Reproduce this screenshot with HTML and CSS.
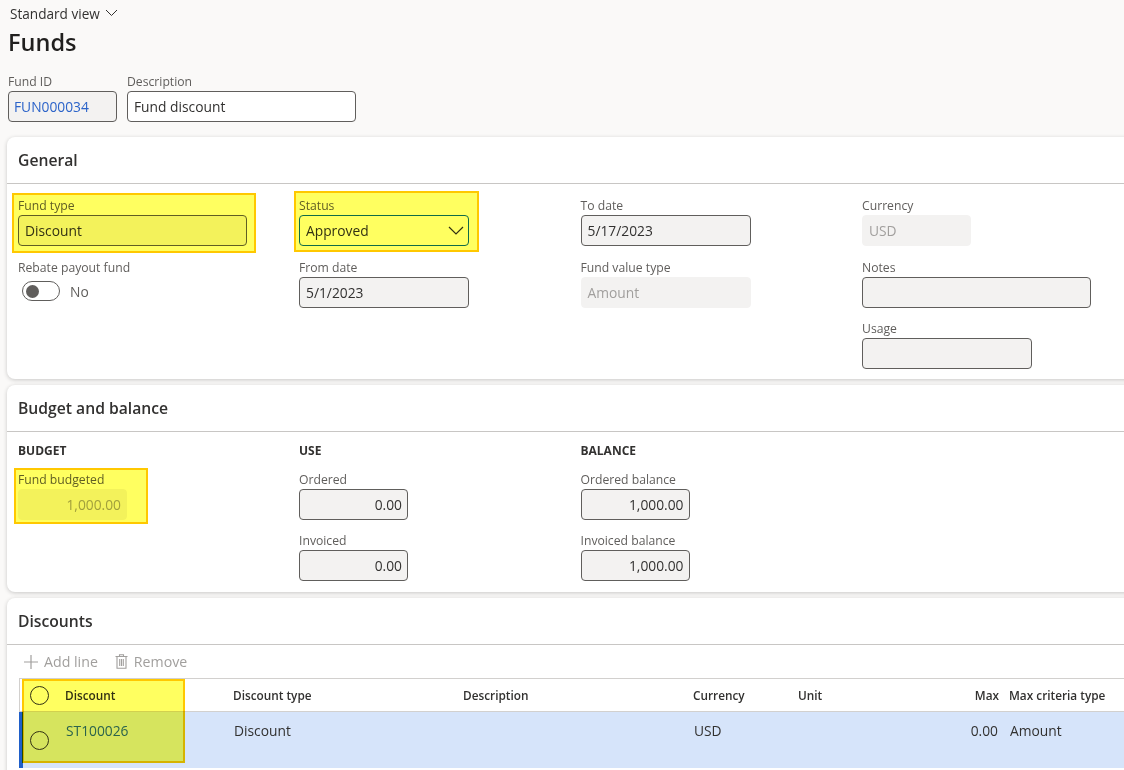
FILE: index.html
```html
<!DOCTYPE html>
<html lang="en">
<head>
    <meta charset="UTF-8">
    <meta name="viewport" content="width=device-width, initial-scale=1.0">
    <title>Funds</title>
    <link rel="stylesheet" href="styles.css">
</head>
<body>
    <div class="view_bar">
        <span>Standard view</span>
        <svg class="view_chevron" width="13" height="8" viewBox="0 0 13 8"><path d="M1 1l5.5 5.5L12 1" fill="none" stroke="#323130" stroke-width="1"/></svg>
    </div>
    <h1 class="page_title">Funds</h1>

    <section class="head_fields">
        <div class="field">
            <div class="field_label">Fund ID</div>
            <div class="input w109"><span class="link fund_id">FUN000034</span></div>
        </div>
        <div class="field">
            <div class="field_label">Description</div>
            <div class="input white w229">Fund discount</div>
        </div>
    </section>

    <section class="card card_general">
        <h2 class="card_title">General</h2>
        <div class="card_cols">
            <div class="col">
                <div class="field">
                    <div class="field_label">Fund type</div>
                    <div class="input w229">Discount</div>
                    <div class="mark mark_type"></div>
                </div>
                <div class="field">
                    <div class="field_label">Rebate payout fund</div>
                    <div class="toggle_row">
                        <span class="toggle"><span class="toggle_knob"></span></span>
                        <span class="toggle_text">No</span>
                    </div>
                </div>
            </div>
            <div class="col">
                <div class="field">
                    <div class="field_label">Status</div>
                    <div class="input white w170 status_box">
                        Approved
                        <svg width="16" height="9" viewBox="0 0 16 9"><path d="M1 1l7 7 7-7" fill="none" stroke="#323130" stroke-width="1.2"/></svg>
                    </div>
                    <div class="mark mark_status"></div>
                </div>
                <div class="field">
                    <div class="field_label">From date</div>
                    <div class="input w170">5/1/2023</div>
                </div>
            </div>
            <div class="col">
                <div class="field">
                    <div class="field_label">To date</div>
                    <div class="input w170">5/17/2023</div>
                </div>
                <div class="field">
                    <div class="field_label">Fund value type</div>
                    <div class="input off w170">Amount</div>
                </div>
            </div>
            <div class="col">
                <div class="field">
                    <div class="field_label">Currency</div>
                    <div class="input off w109">USD</div>
                </div>
                <div class="field">
                    <div class="field_label">Notes</div>
                    <div class="input w229"></div>
                </div>
                <div class="field">
                    <div class="field_label">Usage</div>
                    <div class="input w170"></div>
                </div>
            </div>
        </div>
    </section>

    <section class="card card_budget">
        <h2 class="card_title">Budget and balance</h2>
        <div class="card_cols">
            <div class="col">
                <h3 class="group_title">BUDGET</h3>
                <div class="field">
                    <div class="field_label">Fund budgeted</div>
                    <div class="input off w109 num">1,000.00</div>
                    <div class="mark mark_budget"></div>
                </div>
            </div>
            <div class="col">
                <h3 class="group_title">USE</h3>
                <div class="field">
                    <div class="field_label">Ordered</div>
                    <div class="input w109 num">0.00</div>
                </div>
                <div class="field">
                    <div class="field_label">Invoiced</div>
                    <div class="input w109 num">0.00</div>
                </div>
            </div>
            <div class="col">
                <h3 class="group_title">BALANCE</h3>
                <div class="field">
                    <div class="field_label">Ordered balance</div>
                    <div class="input w109 num">1,000.00</div>
                </div>
                <div class="field">
                    <div class="field_label">Invoiced balance</div>
                    <div class="input w109 num">1,000.00</div>
                </div>
            </div>
        </div>
    </section>

    <section class="card card_discounts">
        <h2 class="card_title">Discounts</h2>
        <div class="toolbar">
            <span class="tool">
                <svg width="14" height="14" viewBox="0 0 14 14"><path d="M7 0v14M0 7h14" stroke="#a19f9d" stroke-width="1.2" fill="none"/></svg>
                Add line
            </span>
            <span class="tool">
                <svg width="13" height="15" viewBox="0 0 13 15"><path d="M4.5 2V.7h4V2M.5 2.5h12M2 2.5v11.8h9V2.5M4.7 5v7M6.5 5v7M8.3 5v7" stroke="#a19f9d" stroke-width="1.1" fill="none"/></svg>
                Remove
            </span>
        </div>
        <div class="grid_wrap">
            <div class="grid_row grid_head">
                <span class="radio"></span>
                <span>Discount</span>
                <span>Discount type</span>
                <span>Description</span>
                <span>Currency</span>
                <span>Unit</span>
                <span class="right">Max</span>
                <span class="last">Max criteria type</span>
            </div>
            <div class="grid_row grid_line">
                <span class="radio"></span>
                <span class="link">ST100026</span>
                <span>Discount</span>
                <span></span>
                <span>USD</span>
                <span></span>
                <span class="right">0.00</span>
                <span class="last">Amount</span>
            </div>
            <div class="mark mark_grid"></div>
        </div>
    </section>
</body>
</html>
```

FILE: styles.css
```css
html, body {
    margin: 0;
    height: 100%;
    overflow: hidden;
}
body {
    width: 1124px;
    height: 770px;
    background: #faf9f8;
    color: #323130;
    font-family: "Open Sans", "Noto Sans", sans-serif;
    font-size: 13.8px;
}

.view_bar {
    display: flex;
    align-items: center;
    gap: 5px;
    height: 27px;
    padding-left: 10px;
    font-size: 13.6px;
}
.view_chevron {
    margin-top: -2px;
}
.page_title {
    margin: 0 0 0 8px;
    height: 30px;
    line-height: 30px;
    font-size: 23.5px;
    font-weight: 600;
    color: #201f1e;
}

.head_fields {
    display: flex;
    gap: 10px;
    margin: 14px 0 15px 8px;
}

.field {
    position: relative;
}
.field_label {
    height: 20px;
    line-height: 21px;
    font-size: 12.2px;
    font-weight: 500;
    color: #605e5c;
}
.input {
    box-sizing: border-box;
    height: 31px;
    line-height: 30px;
    padding: 0 5px 0 6px;
    background: #f3f2f1;
    border: 1px solid #605e5c;
    border-radius: 4px;
}
.white {
    background: #fff;
}
.off {
    border-color: #f3f2f1;
    color: #a19f9d;
}
.num {
    text-align: right;
}
.link {
    color: #2b63c9;
}
.fund_id {
    margin-left: -1px;
}
.w109 { width: 109px; }
.w170 { width: 170px; }
.w229 { width: 229px; }

.status_box {
    display: flex;
    align-items: center;
    justify-content: space-between;
    padding-right: 4px;
    border-color: #0f6cbd;
}

.toggle_row {
    display: flex;
    align-items: center;
    gap: 10px;
    height: 29px;
    padding-left: 4px;
}
.toggle {
    box-sizing: border-box;
    display: flex;
    align-items: center;
    width: 38px;
    height: 20px;
    padding-left: 3px;
    background: #fff;
    border: 1px solid #605e5c;
    border-radius: 10px;
}
.toggle_knob {
    width: 13px;
    height: 13px;
    background: #605e5c;
    border-radius: 50%;
}
.toggle_text {
    color: #605e5c;
}

.card {
    margin: 0 -20px 6px 7px;
    background: #fff;
    border-radius: 8px;
    box-shadow: 0 1px 4px rgba(0, 0, 0, 0.2);
}
.card_title {
    box-sizing: border-box;
    height: 47px;
    margin: 0;
    padding-left: 11px;
    line-height: 46px;
    font-size: 15.7px;
    font-weight: 600;
    border-bottom: 1px solid #c8c6c4;
}
.card_cols {
    display: grid;
    grid-template-columns: 281px 281.5px 281.5px 281.5px;
    padding: 11px 0 10px 11px;
}
.card_budget .card_cols {
    padding-bottom: 11px;
}
.card_discounts {
    padding-bottom: 20px;
}
.col {
    display: flex;
    flex-direction: column;
    gap: 10.5px;
}
.group_title {
    height: 16px;
    margin: 0;
    line-height: 16px;
    font-size: 12px;
    font-weight: 700;
}
.col .group_title + .field {
    margin-top: -1px;
}

/* yellow marker the author drew over the screenshot */
.mark {
    position: absolute;
    box-sizing: border-box;
    background: #ffff60;
    border: 2px solid #ffc800;
    mix-blend-mode: multiply;
}
.mark_type {
    top: -2px;
    left: -6px;
    width: 244px;
    height: 60px;
}
.mark_status {
    top: -4px;
    left: -5px;
    width: 185px;
    height: 61px;
}
.mark_budget {
    top: -1px;
    left: -4px;
    width: 134px;
    height: 56px;
}
.mark_grid {
    top: 0;
    left: 2px;
    width: 163px;
    height: 84px;
}

.toolbar {
    display: flex;
    align-items: center;
    gap: 17px;
    height: 33px;
    padding-left: 17px;
    font-size: 14.2px;
    color: #a19f9d;
}
.tool {
    display: flex;
    align-items: center;
    gap: 6px;
}

.grid_wrap {
    position: relative;
    margin: 0 0 0 12px;
    border-top: 1px solid #d2d0ce;
    border-left: 1px solid #d2d0ce;
}
.grid_row {
    display: grid;
    grid-template-columns: 45px 168px 230px 230px 105px 120px 81px 170px;
}
.grid_head {
    box-sizing: border-box;
    height: 33px;
    align-items: center;
    font-size: 11.8px;
    font-weight: 600;
    border-bottom: 1px solid #d2d0ce;
}
.grid_line {
    height: 56px;
    margin-left: -1px;
    background: #d6e4fa;
    border-left: 4px solid #1f5fc9;
    box-sizing: border-box;
    padding-top: 9px;
    grid-template-columns: 43px 168px 230px 230px 105px 120px 79px 170px;
}
.right {
    text-align: right;
}
.last {
    padding-left: 10px;
}
.grid_line .last {
    padding-left: 12px;
}
.radio {
    box-sizing: border-box;
    width: 19px;
    height: 19px;
    margin-left: 10px;
    border: 1px solid #323130;
    border-radius: 50%;
}
.grid_line .radio {
    margin-top: 10px;
    margin-left: 7px;
}
```
